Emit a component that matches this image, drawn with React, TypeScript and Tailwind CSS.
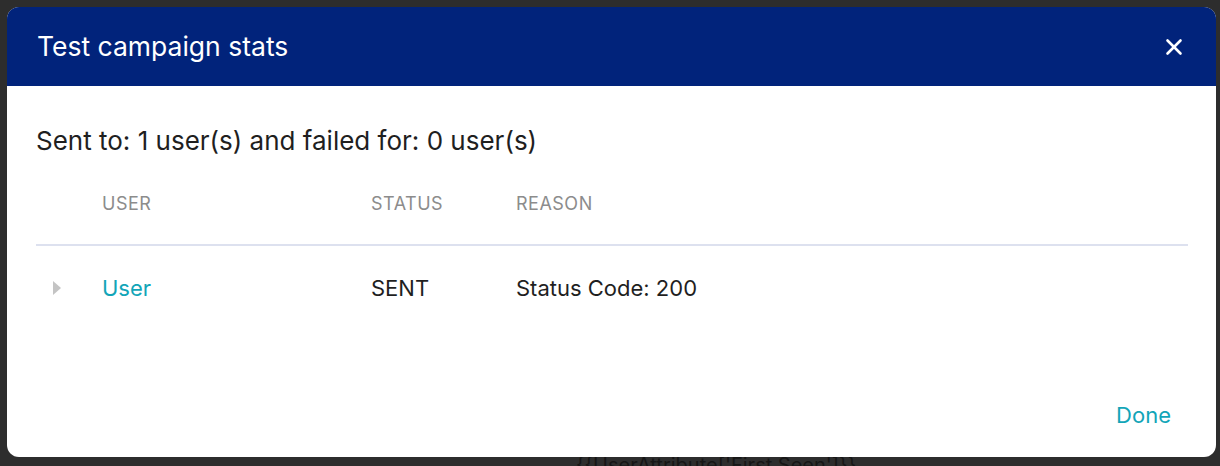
import { X } from "lucide-react";

const rows = [{ user: "User", status: "SENT", reason: "Status Code: 200" }];

export default function App() {
  return (
    <div className="relative h-[466px] w-[1220px] overflow-hidden bg-[#2d2d2d] font-['Inter',_'Liberation_Sans',_sans-serif]">
      {/* page content behind the overlay */}
      <div className="absolute left-[576px] top-[450px] text-[20px] text-[#161616]">
        {"{{UserAttribute['First Seen']}}"}
      </div>

      <div className="relative px-[7px] pt-[7px]">
        <div className="flex h-[450px] w-[1209px] flex-col overflow-hidden rounded-[12px] bg-white">
          {/* header */}
          <div className="flex h-[79px] items-center justify-between bg-[#01237b] pl-[30px] pr-[29px]">
            <h2 className="text-[26.5px] leading-none text-white">Test campaign stats</h2>
            <button className="text-white">
              <X className="h-[26px] w-[26px]" strokeWidth={2.4} />
            </button>
          </div>

          {/* body */}
          <div className="flex flex-1 flex-col px-[29px] pt-[38px]">
            <p className="text-[26px] leading-[34px] text-[#1f1f1f]">
              Sent to: 1 user(s) and failed for: 0 user(s)
            </p>

            <div className="mt-[34px] mr-[-1px]">
              <div className="grid grid-cols-[66px_269px_145px_1fr] border-b-2 border-[#dde1ef] pb-[28px] text-[18px] leading-[24px] tracking-[0.5px] text-[#8c8c8c]">
                <span />
                <span>USER</span>
                <span>STATUS</span>
                <span>REASON</span>
              </div>
              {rows.map((row) => (
                <div
                  key={row.user}
                  className="grid grid-cols-[66px_269px_145px_1fr] items-center pt-[30px] text-[22px] leading-[24px] text-[#1f1f1f]"
                >
                  <span className="pl-[16px]">
                    <svg width="9" height="14" viewBox="0 0 9 14" className="text-[#c4c4c4]">
                      <path d="M1 0 L9 7 L1 14 Z" fill="currentColor" />
                    </svg>
                  </span>
                  <span className="text-[#12a5b8]">{row.user}</span>
                  <span>{row.status}</span>
                  <span>{row.reason}</span>
                </div>
              ))}
            </div>

            <div className="mt-auto flex justify-end pb-[24px] pr-0">
              <button className="px-[16px] py-[6px] text-[22px] leading-[24px] text-[#12a5b8]">Done</button>
            </div>
          </div>
        </div>
      </div>
    </div>
  );
}
